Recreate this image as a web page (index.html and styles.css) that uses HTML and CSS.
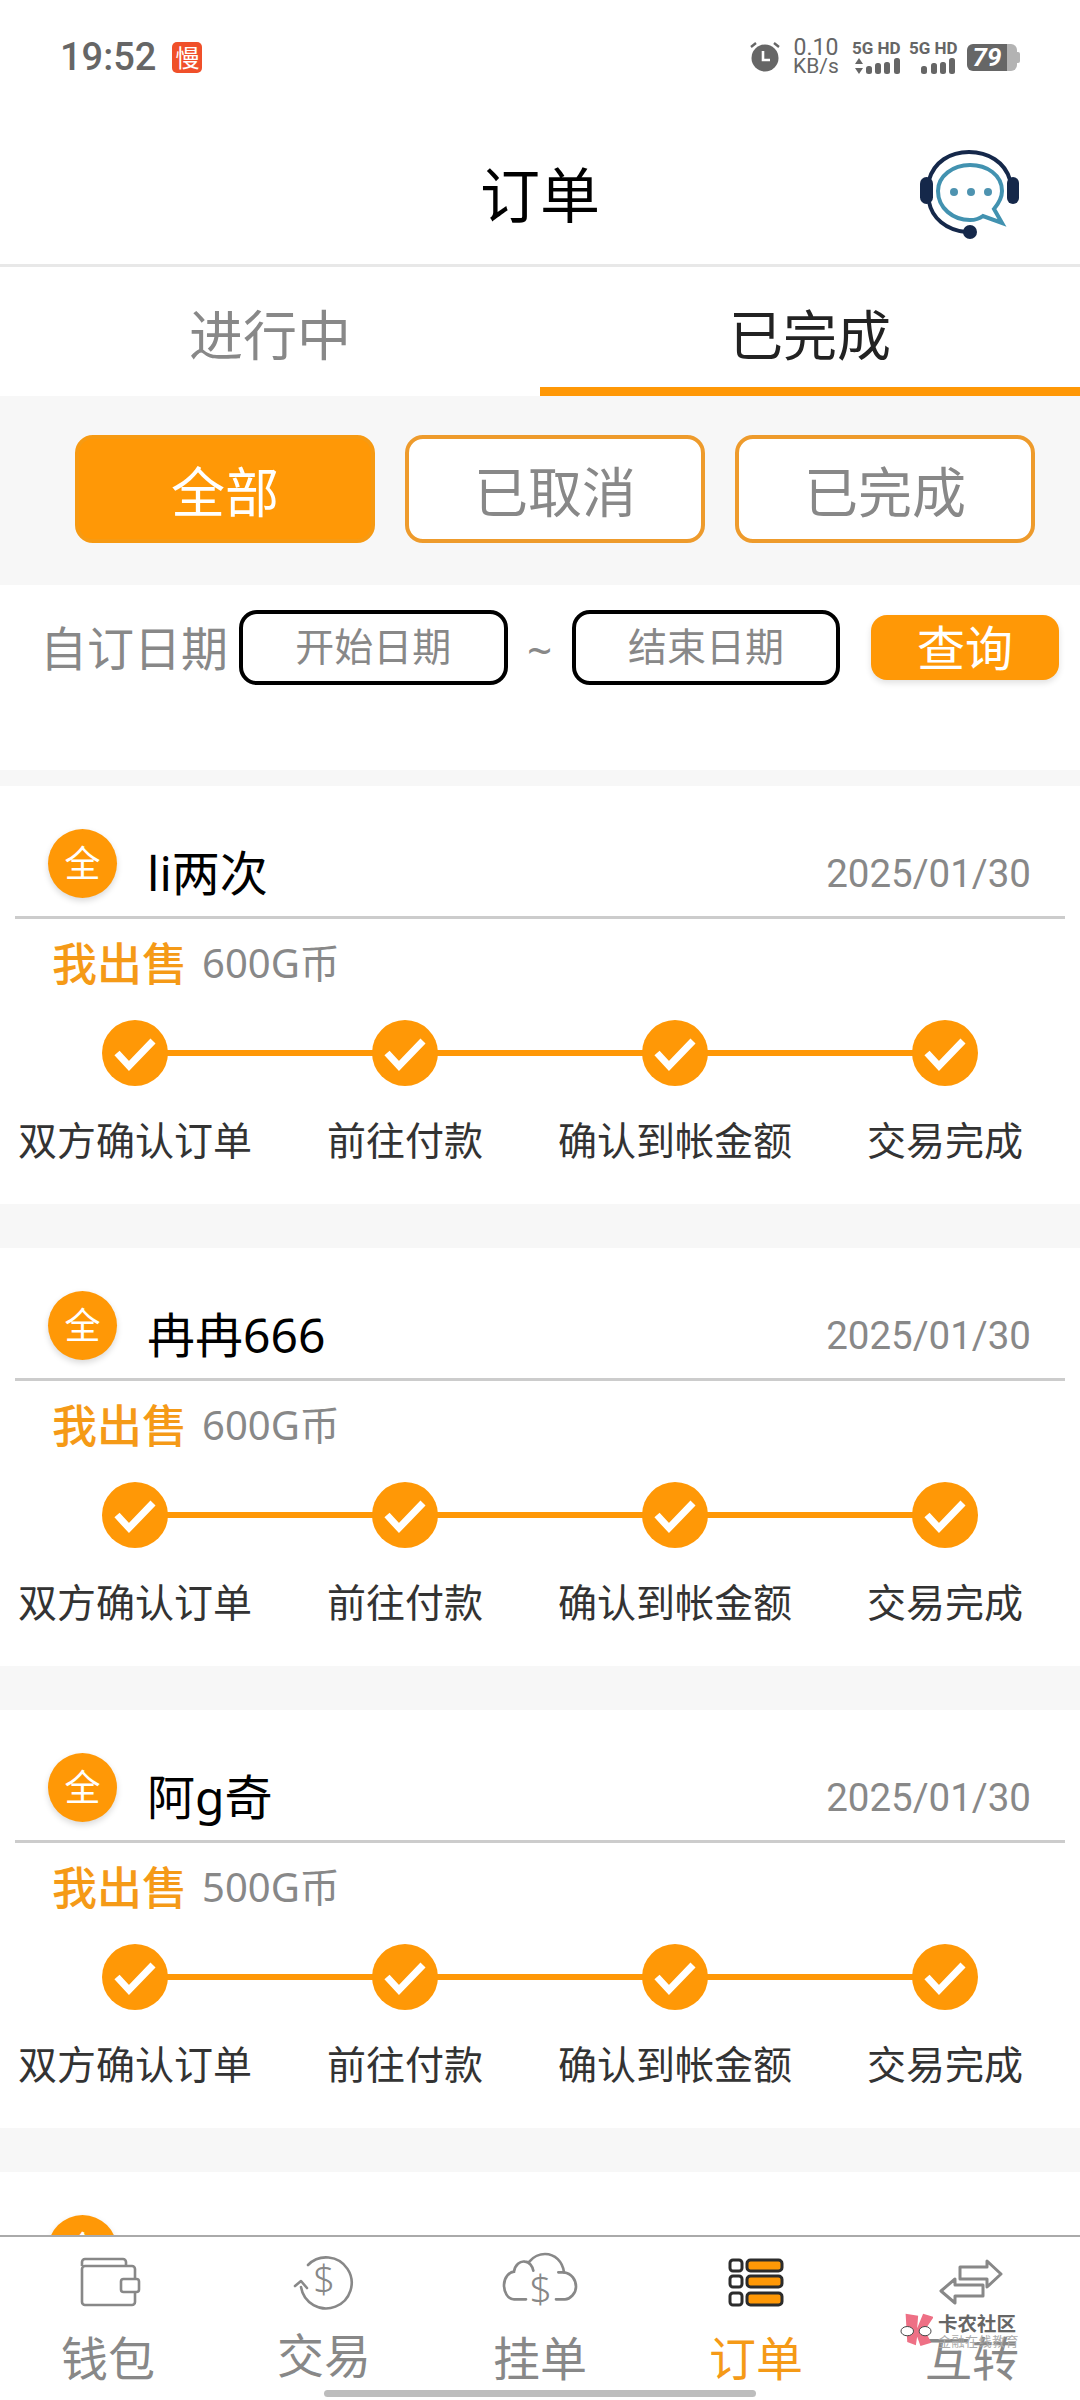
FILE: index.html
```html
<!DOCTYPE html>
<html lang="zh-CN">
<head>
<meta charset="utf-8">
<title>订单</title>
<link rel="stylesheet" href="styles.css">
</head>
<body>
<div class="screen">
  <div class="status">
    <span class="time">19:52</span>
    <span class="app-badge">慢</span>
    <div class="status-right">
      <svg class="alarm" viewBox="0 0 30 30"><circle cx="15" cy="16" r="13.5" fill="#666"/><path d="M1 5 6 1M29 5 24 1" stroke="#666" stroke-width="2.4" fill="none"/><path d="M13 9v9h7" stroke="#fff" stroke-width="2.6" fill="none"/></svg>
      <div class="speed"><span class="speed-value">0.10</span><span>KB/s</span></div>
      <div class="sim">
        <span class="sim-label">5G HD</span>
        <svg class="bars" viewBox="0 0 48 16"><path d="M7 0 11 6H3ZM7 16 3 10h8Z" fill="#666"/><g fill="#666"><rect x="14" y="8" width="6" height="8" rx="2.5"/><rect x="23" y="5" width="6" height="11" rx="2.5"/><rect x="32" y="4" width="6" height="12" rx="2.5"/><rect x="42" y="0" width="6" height="16" rx="2.5"/></g></svg>
      </div>
      <div class="sim">
        <span class="sim-label">5G HD</span>
        <svg class="bars" viewBox="0 0 48 16"><g fill="#666"><rect x="12" y="8" width="6" height="8" rx="2.5"/><rect x="22" y="5" width="6" height="11" rx="2.5"/><rect x="31" y="4" width="6" height="12" rx="2.5"/><rect x="40" y="0" width="6" height="16" rx="2.5"/></g></svg>
      </div>
      <div class="battery"><span class="battery-level">79</span><span class="battery-rest"></span><span class="battery-tip"></span></div>
    </div>
  </div>

  <header class="topbar">
    <h1 class="page-title">订单</h1>
    <svg class="support" viewBox="0 0 100 90">
      <path d="M9 30C14 12 30 2 49 2S85 12 90 30" fill="none" stroke="#15284a" stroke-width="4"/>
      <path d="M9 52C12 68 26 80 46 82" fill="none" stroke="#15284a" stroke-width="4"/>
      <rect x="0" y="27" width="13" height="27" rx="6.5" fill="#15284a"/>
      <rect x="87" y="27" width="12" height="27" rx="6" fill="#15284a"/>
      <circle cx="50" cy="82" r="7" fill="#15284a"/>
      <path d="M74 59C79 53 82 47 82 41 82 25 67 15 50 15S18 26 18 41C18 58 33 70 50 70 55 70 59 69 63 66L82 73Z" fill="none" stroke="#4292b0" stroke-width="4"/>
      <circle cx="34" cy="42" r="4" fill="#4e93b0"/><circle cx="51" cy="42" r="4" fill="#4e93b0"/><circle cx="68" cy="42" r="4" fill="#4e93b0"/>
    </svg>
  </header>

  <nav class="tabs">
    <div class="tab">进行中</div>
    <div class="tab tab-active">已完成</div>
  </nav>

  <div class="filters">
    <button class="filter filter-on">全部</button>
    <button class="filter">已取消</button>
    <button class="filter">已完成</button>
  </div>

  <div class="date-row">
    <span class="date-label">自订日期</span>
    <div class="date-input">开始日期</div>
    <span class="tilde">~</span>
    <div class="date-input">结束日期</div>
    <button class="query">查询</button>
  </div>

  <main class="orders">
    <article class="card">
      <div class="card-head"><span class="mark">全</span><span class="name">li两次</span><span class="date">2025/01/30</span></div>
      <div class="deal"><span class="side">我出售</span><span class="amount">600G币</span></div>
      <ol class="steps">
        <li class="step"><svg class="check" viewBox="0 0 66 66"><path d="M15 33 27 46 51 21" /></svg><span>双方确认订单</span></li>
        <li class="step"><svg class="check" viewBox="0 0 66 66"><path d="M15 33 27 46 51 21" /></svg><span>前往付款</span></li>
        <li class="step"><svg class="check" viewBox="0 0 66 66"><path d="M15 33 27 46 51 21" /></svg><span>确认到帐金额</span></li>
        <li class="step"><svg class="check" viewBox="0 0 66 66"><path d="M15 33 27 46 51 21" /></svg><span>交易完成</span></li>
      </ol>
    </article>
    <article class="card">
      <div class="card-head"><span class="mark">全</span><span class="name">冉冉666</span><span class="date">2025/01/30</span></div>
      <div class="deal"><span class="side">我出售</span><span class="amount">600G币</span></div>
      <ol class="steps">
        <li class="step"><svg class="check" viewBox="0 0 66 66"><path d="M15 33 27 46 51 21" /></svg><span>双方确认订单</span></li>
        <li class="step"><svg class="check" viewBox="0 0 66 66"><path d="M15 33 27 46 51 21" /></svg><span>前往付款</span></li>
        <li class="step"><svg class="check" viewBox="0 0 66 66"><path d="M15 33 27 46 51 21" /></svg><span>确认到帐金额</span></li>
        <li class="step"><svg class="check" viewBox="0 0 66 66"><path d="M15 33 27 46 51 21" /></svg><span>交易完成</span></li>
      </ol>
    </article>
    <article class="card">
      <div class="card-head"><span class="mark">全</span><span class="name">阿g奇</span><span class="date">2025/01/30</span></div>
      <div class="deal"><span class="side">我出售</span><span class="amount">500G币</span></div>
      <ol class="steps">
        <li class="step"><svg class="check" viewBox="0 0 66 66"><path d="M15 33 27 46 51 21" /></svg><span>双方确认订单</span></li>
        <li class="step"><svg class="check" viewBox="0 0 66 66"><path d="M15 33 27 46 51 21" /></svg><span>前往付款</span></li>
        <li class="step"><svg class="check" viewBox="0 0 66 66"><path d="M15 33 27 46 51 21" /></svg><span>确认到帐金额</span></li>
        <li class="step"><svg class="check" viewBox="0 0 66 66"><path d="M15 33 27 46 51 21" /></svg><span>交易完成</span></li>
      </ol>
    </article>
    <article class="card">
      <div class="card-head"><span class="mark">全</span></div>
    </article>
  </main>

  <footer class="bottom-nav">
    <div class="nav-item">
      <svg class="nav-icon" viewBox="0 0 100 60"><g fill="none" stroke="#888" stroke-width="2.6" stroke-linejoin="round"><path d="M24 16V12a3 3 0 0 1 3-3H65a3 3 0 0 1 3 3v4"/><rect x="24" y="16" width="53" height="39" rx="3"/><rect x="63" y="29" width="18" height="13" rx="2.5" fill="#fff"/></g></svg>
      <span>钱包</span>
    </div>
    <div class="nav-item nav-item-raised">
      <svg class="nav-icon" viewBox="0 0 100 60"><g fill="none" stroke="#888" stroke-width="2.6" stroke-linecap="round" stroke-linejoin="round"><path d="M34 15A25.500 25.500 0 1 1 27 37"/><path d="M21 36 27 31 33 38"/></g><text class="glyph" x="50" y="43" text-anchor="middle">$</text></svg>
      <span>交易</span>
    </div>
    <div class="nav-item">
      <svg class="nav-icon" viewBox="0 0 300 180"><g fill="none" stroke="#888" stroke-width="8" stroke-linecap="round"><path d="M108 148H72C52 148 42 125 42 105 42 82 58 66 72 65 75 45 90 32 105 35 118 35 128 50 130 62"/><path d="M118 35C130 20 150 12 165 12 195 12 218 35 222 67H205"/><path d="M222 67C245 70 258 90 258 110 258 130 240 148 225 148H198"/></g><text class="glyph-lg" x="152" y="158" text-anchor="middle">$</text></svg>
      <span>挂单</span>
    </div>
    <div class="nav-item nav-on">
      <svg class="nav-icon" viewBox="0 0 100 60"><g fill="#fff" stroke="#2c2c2c" stroke-width="3"><rect x="24" y="10" width="12" height="11" rx="3"/><rect x="24" y="26" width="12" height="11" rx="3"/><rect x="24" y="43" width="12" height="12" rx="3"/></g><g fill="#ff9806" stroke="#2c2c2c" stroke-width="3"><rect x="41" y="10" width="35" height="11" rx="3.500"/><rect x="41" y="26" width="35" height="11" rx="3.500"/><rect x="41" y="43" width="35" height="12" rx="3.500"/></g></svg>
      <span>订单</span>
    </div>
    <div class="nav-item">
      <svg class="nav-icon" viewBox="0 0 100 60"><g fill="none" stroke="#888" stroke-width="3" stroke-linejoin="round"><path d="M38 17H65V11L79 24 65 37V29H38Z"/><path d="M61 35H33V29L19 41 33 53V46H61Z" fill="#fff"/></g></svg>
      <span>互转</span>
    </div>
  </footer>

  <div class="watermark">
    <svg class="wm-logo" viewBox="30 40 100 100"><path d="M47 42 85 48 82 86 100 42 132 52 105 92 125 130 92 140 82 112 78 138 52 128Z" fill="#ee7085"/><ellipse cx="52" cy="95" rx="19" ry="14" fill="#fff" stroke="#444" stroke-width="3"/><ellipse cx="106" cy="95" rx="18" ry="14" fill="#fff" stroke="#444" stroke-width="3"/></svg>
    <div class="wm-text"><span class="wm-name">卡农社区</span><span class="wm-sub">金融在线教育</span></div>
  </div>
  <div class="home-bar"></div>
</div>
</body>
</html>
```

FILE: styles.css
```css
* { box-sizing: border-box; }

html, body {
  margin: 0;
  padding: 0;
  background: #fff;
}

body {
  font-family: "Noto Sans", "Noto Sans CJK SC", sans-serif;
  color: #888;
}

.screen {
  position: relative;
  width: 1080px;
  height: 2400px;
  display: flex;
  flex-direction: column;
  overflow: hidden;
  background: #fff;
}

/* Status bar */
.status {
  flex: none;
  height: 114px;
  display: flex;
  align-items: center;
  padding: 0 60px;
  color: #666;
}

.time {
  font-family: Roboto, sans-serif;
  font-size: 38px;
  font-weight: 500;
  letter-spacing: 0;
}

.app-badge {
  width: 30px;
  height: 31px;
  margin-left: 16px;
  border-radius: 5px;
  background: #f0502a;
  color: #fff;
  font-size: 24px;
  line-height: 31px;
  text-align: center;
}

.status-right {
  margin-left: auto;
  display: flex;
  align-items: center;
}

.alarm { width: 30px; height: 30px; }

.speed {
  display: flex;
  flex-direction: column;
  margin-left: 13px;
  font-family: Roboto, sans-serif;
  font-size: 21px;
  line-height: 18px;
  width: 46px;
  text-align: center;
}

.speed-value { font-size: 23px; }

.sim {
  display: flex;
  flex-direction: column;
  margin-left: 13px;
  width: 48px;
}

.sim + .sim { margin-left: 9px; }

.sim-label {
  font-family: Roboto, sans-serif;
  font-size: 17px;
  font-weight: 700;
  line-height: 16px;
  white-space: nowrap;
}

.bars { width: 48px; height: 16px; margin-top: 2px; }

.battery {
  display: flex;
  align-items: center;
  margin-left: 10px;
  height: 27px;
}

.battery-level {
  width: 40px;
  height: 27px;
  background: #666;
  border-radius: 6px 0 0 6px;
  color: #fff;
  font-family: Roboto, sans-serif;
  font-size: 26px;
  font-weight: 700;
  font-style: italic;
  line-height: 27px;
  text-align: center;
}

.battery-rest {
  width: 10px;
  height: 27px;
  background: #b3b3b3;
  border-radius: 0 6px 6px 0;
}

.battery-tip {
  width: 3px;
  height: 11px;
  background: #b3b3b3;
  border-radius: 0 2px 2px 0;
}

/* Title bar */
.topbar {
  flex: none;
  position: relative;
  height: 153px;
  border-bottom: 3px solid #e8e8e8;
  display: flex;
  align-items: center;
  justify-content: center;
}

.page-title {
  margin: 12px 0 0;
  font-size: 60px;
  font-weight: 400;
  color: #000;
  line-height: 80px;
}

.support {
  position: absolute;
  right: 60px;
  top: 36px;
  width: 100px;
  height: 90px;
}

/* Tabs */
.tabs {
  flex: none;
  display: flex;
  height: 129px;
}

.tab {
  flex: 1;
  font-size: 54px;
  line-height: 136px;
  text-align: center;
  color: #888;
}

.tab-active {
  color: #222;
  border-bottom: 9px solid #ff9806;
}

/* Status filter */
.filters {
  flex: none;
  display: flex;
  gap: 30px;
  height: 189px;
  padding: 39px 45px 0 75px;
  background: #f7f7f7;
}

.filter {
  width: 300px;
  height: 108px;
  border: 4px solid #ee9b2c;
  border-radius: 18px;
  background: #fff;
  color: #888;
  font: inherit;
  font-size: 54px;
  line-height: 1;
  padding: 6px 0 0;
}

.filter-on {
  background: #ff9806;
  border-color: #f79a12;
  color: #fff;
}

/* Date range */
.date-row {
  flex: none;
  height: 185px;
  display: flex;
  align-items: flex-start;
  padding: 25px 21px 0 40px;
}

.date-label {
  font-size: 47px;
  line-height: 76px;
  margin-right: 11px;
  white-space: nowrap;
}

.date-input {
  width: 269px;
  height: 75px;
  border: 4px solid #000;
  border-radius: 18px;
  font-size: 39px;
  line-height: 64px;
  text-align: center;
  color: #888;
}

.tilde {
  width: 64px;
  font-size: 44px;
  line-height: 80px;
  text-align: center;
}

.query {
  width: 188px;
  height: 65px;
  margin: 5px 0 0 31px;
  padding: 0;
  border: 0;
  border-radius: 16px;
  background: #ff9806;
  box-shadow: 0 3px 6px rgba(0, 0, 0, .12);
  color: #fff;
  font: inherit;
  font-size: 48px;
  line-height: 65px;
}

/* Order list */
.orders {
  flex: 1;
  min-height: 0;
  overflow: hidden;
  display: flex;
  flex-direction: column;
  gap: 44px;
  padding-top: 16px;
  background: #f7f7f7;
}

.card {
  flex: none;
  height: 418px;
  background: #fff;
}

.card-head {
  display: flex;
  align-items: flex-start;
  height: 133px;
  margin: 0 15px;
  padding: 43px 34px 0 33px;
  border-bottom: 3px solid #ccc;
}

.mark {
  width: 69px;
  height: 69px;
  border-radius: 50%;
  background: #ff9806;
  box-shadow: 0 3px 6px rgba(0, 0, 0, .15);
  color: #fff;
  font-size: 36px;
  line-height: 69px;
  text-align: center;
}

.name {
  margin: 14px 0 0 30px;
  color: #000;
  font-size: 48px;
  line-height: 60px;
}

.date {
  margin: 15px 0 0 auto;
  font-family: Roboto, sans-serif;
  font-size: 38.500px;
  line-height: 60px;
  color: #888;
}

.deal {
  display: flex;
  align-items: center;
  height: 60px;
  margin-top: 12px;
  padding-left: 52px;
}

.side {
  color: #f59a17;
  font-size: 45px;
  font-weight: 500;
}

.amount {
  margin-left: 15px;
  font-size: 40px;
  color: #888;
}

.steps {
  display: grid;
  grid-template-columns: repeat(4, 270px);
  margin: 29px 0 0;
  padding: 0;
  list-style: none;
}

.step {
  position: relative;
  display: flex;
  flex-direction: column;
  align-items: center;
  gap: 29px;
}

.step:not(:last-child)::after {
  content: "";
  position: absolute;
  left: 50%;
  top: 30px;
  width: 100%;
  height: 6px;
  background: #ff9806;
}

.check {
  position: relative;
  z-index: 1;
  width: 66px;
  height: 66px;
  border-radius: 50%;
  background: #ff9806;
}

.check path {
  fill: none;
  stroke: #fff;
  stroke-width: 7;
}

.step span {
  color: #333;
  font-size: 39px;
  line-height: 50px;
  white-space: nowrap;
}

/* Bottom navigation */
.bottom-nav {
  flex: none;
  height: 165px;
  display: grid;
  grid-template-columns: repeat(5, 216px);
  border-top: 2px solid #aaa;
  background: #fff;
  padding-top: 13px;
}

.nav-item {
  display: flex;
  flex-direction: column;
  align-items: center;
  color: #888;
  font-size: 47px;
  line-height: 56px;
}

.nav-icon { width: 100px; height: 60px; margin-bottom: 20px; overflow: visible; }

.nav-item-raised .nav-icon { margin-bottom: 17px; }

.nav-on { color: #f59a17; }

.glyph {
  font-family: "Noto Sans", sans-serif;
  font-size: 38px;
  font-weight: 300;
  fill: #888;
}

.glyph-lg {
  font-family: "Noto Sans", sans-serif;
  font-size: 118px;
  font-weight: 300;
  fill: #888;
}

/* Forum watermark over the lower right corner */
.watermark {
  position: absolute;
  left: 900px;
  top: 2313px;
  display: flex;
  align-items: flex-start;
  gap: 5px;
}

.wm-logo { width: 33px; height: 33px; }

.wm-text {
  display: flex;
  flex-direction: column;
  width: 80px;
}

.wm-name {
  color: #666;
  font-size: 19.500px;
  font-weight: 700;
  line-height: 21px;
  white-space: nowrap;
}

.wm-sub {
  color: #aaa;
  font-size: 13px;
  line-height: 14px;
  white-space: nowrap;
  letter-spacing: .5px;
}

/* Gesture pill */
.home-bar {
  position: absolute;
  left: 324px;
  top: 2390px;
  width: 432px;
  height: 7px;
  border-radius: 4px;
  background: #bdbdbd;
}
```
